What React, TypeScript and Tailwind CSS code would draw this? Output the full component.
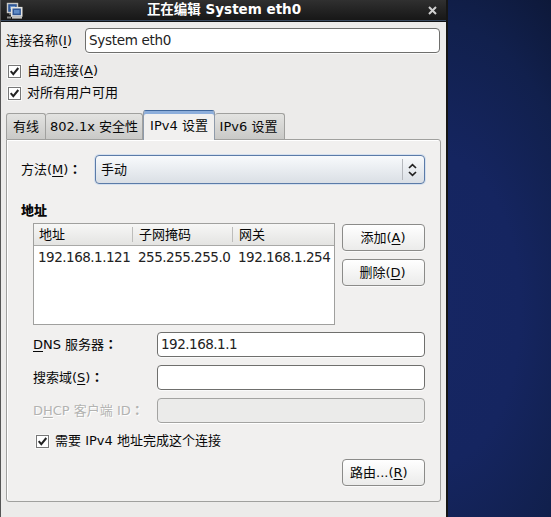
import type { ReactNode } from "react";
import clsx from "clsx";

function Key({ children }: { children: string }) {
  return <span className="underline decoration-1 underline-offset-2">{children}</span>;
}

function Colon() {
  return <span className="font-['Noto_Sans_CJK_JP'] font-bold">：</span>;
}

function Check({ className, children }: { className?: string; children: ReactNode }) {
  return (
    <label className={clsx("flex items-center gap-[6px] h-[22px]", className)}>
      <span className="w-[13px] h-[13px] bg-white border border-[#777] shadow-[0_0_0_1px_#f8f8f7]">
        <svg viewBox="0 0 11 11" className="w-[11px] h-[11px]" fill="none" stroke="#222" strokeWidth="2">
          <path d="M1.7 5.2 L4.3 8.2 L9.3 2" />
        </svg>
      </span>
      <span>{children}</span>
    </label>
  );
}

function Field({
  value = "",
  disabled,
  className,
}: {
  value?: string;
  disabled?: boolean;
  className: string;
}) {
  return (
    <div
      className={clsx(
        "h-[25px] shrink-0 rounded-[4px] border pl-[3px] text-[13.5px] leading-[22px] text-[#222]",
        disabled
          ? "border-[#a3a3a1] bg-[#ebebea] shadow-[0_1px_0_#fff]"
          : "border-[#6f6f6d] bg-white shadow-[0_1px_0_#fafafa]",
        className,
      )}
    >
      {value}
    </div>
  );
}

function Button({ className, children }: { className?: string; children: ReactNode }) {
  return (
    <button
      type="button"
      className={clsx(
        "block w-[83px] h-[27px] rounded-[4px] border border-[#8b8b89] bg-linear-to-b from-white to-[#ebebea] shadow-[0_1px_0_#fafafa] leading-[25px]",
        className,
      )}
    >
      {children}
    </button>
  );
}

function Tab({ active, className, children }: { active?: boolean; className: string; children: ReactNode }) {
  return (
    <div
      className={clsx(
        "border border-b-0 rounded-t-[3px] text-center overflow-hidden",
        active
          ? "h-[30px] -mb-px border-[#8e9aaa] border-t-[#3f679d] bg-[#f1f0ef] leading-[29px] shadow-[inset_0_3px_0_#8daedb]"
          : "h-[26px] border-[#a0a09e] bg-linear-to-b from-[#e3e3e1] to-[#c9c9c7] leading-[26px]",
        className,
      )}
    >
      {children}
    </div>
  );
}

function NetworkIcon() {
  return (
    <svg width="17" height="17" viewBox="0 0 17 17" className="ml-[5px]">
      <path d="M1 15.5 H5" stroke="#8a8a88" strokeWidth="2" />
      <path d="M3 12 H6" stroke="#777" strokeWidth="1.6" />
      <rect x="1.5" y="1.5" width="10" height="9" fill="#2f5796" stroke="#c9c9c6" strokeWidth="1.4" />
      <rect x="4" y="4" width="5" height="3" fill="#5f8bc6" />
      <rect x="5.7" y="5.7" width="10" height="8.3" fill="#2f5796" stroke="#e4e4e1" strokeWidth="1.6" />
      <rect x="8" y="8" width="5.5" height="3.6" fill="#5f8bc6" />
      <path d="M6 15.7 H16" stroke="#c4c4c1" strokeWidth="1.8" />
    </svg>
  );
}

function TitleBar() {
  return (
    <header className="flex items-center h-[22px] border-b border-b-[#101214] bg-linear-to-b from-[#303030] to-[#161616] text-white shadow-[inset_0_-1px_0_#38475c]">
      <NetworkIcon />
      <h1 className="flex-1 pr-[3px] text-center font-bold leading-[18px] -mt-[3px] text-[13.5px]">
        正在编辑 System eth0
      </h1>
      <svg width="9" height="9" viewBox="0 0 9 9" className="mr-[9px]">
        <path d="M1 1 L8 8 M8 1 L1 8" stroke="#d0d0d0" strokeWidth="2" />
      </svg>
    </header>
  );
}

const columns = ["地址", "子网掩码", "网关"];
const address = ["192.168.1.121", "255.255.255.0", "192.168.1.254"];

function AddressTable() {
  return (
    <div className="w-[302px] h-[102px] border border-[#a0a09e] bg-white">
      <div className="grid grid-cols-[99px_100px_101px] h-[22px] items-center border-b border-[#a9a9a7] bg-linear-to-b from-[#f7f7f6] to-[#e4e4e2]">
        {columns.map((name, i) => (
          <div
            key={name}
            className={clsx(
              "h-[15px] leading-[15px]",
              i === 0 ? "pl-[5px]" : "pl-[6px]",
              i < 2 && "border-r border-[#bdbdbb]",
            )}
          >
            {name}
          </div>
        ))}
      </div>
      <div className="grid grid-cols-[100px_100px_100px] h-[23px] text-[13.5px] text-[#222]">
        {address.map((part) => (
          <div key={part} className="pl-[4px] leading-[22px] tracking-[-0.5px] whitespace-nowrap">
            {part}
          </div>
        ))}
      </div>
    </div>
  );
}

function Ipv4Panel() {
  return (
    <section className="ml-[5px] w-[435px] h-[363px] rounded-b-[3px] rounded-tr-[3px] border border-[#a0a09e] bg-[#f1f0ef] pt-[15px] shadow-[inset_1px_1px_0_#fff]">
      <div className="flex items-center pl-[14px]">
        <span className="w-[74px]">
          方法(<Key>M</Key>)<Colon />
        </span>
        <div className="flex items-center w-[330px] h-[29px] rounded-[4px] border border-[#5b7ba8] bg-linear-to-b from-[#f8fafc] to-[#dadfe5] pl-[5px] shadow-[0_0_0_1px_#d5e0ee]">
          <span className="flex-1">手动</span>
          <span className="w-px h-[21px] bg-[#b5b8bd]" />
          <svg width="21" height="14" viewBox="0 0 21 14" fill="none" stroke="#222" strokeWidth="1.7">
            <path d="M6 5 L9.5 1.7 L13 5 M6 9 L9.5 12.3 L13 9" />
          </svg>
        </div>
      </div>

      <h2 className="mt-[17px] pl-[14px] h-[22px] leading-[20px] font-black">地址</h2>

      <div className="flex gap-[7px] pl-[26px]">
        <AddressTable />
        <div className="flex flex-col gap-[8px] pt-px">
          <Button className="pr-px">
            添加(<Key>A</Key>)
          </Button>
          <Button className="pr-[2px]">
            删除(<Key>D</Key>)
          </Button>
        </div>
      </div>

      <div className="mt-[7px] ml-[26px] flex flex-col gap-[8px]">
        <div className="flex items-center">
          <span className="w-[124px]">
            <Key>D</Key>NS 服务器<Colon />
          </span>
          <Field className="w-[268px] tracking-[-0.5px]" value="192.168.1.1" />
        </div>
        <div className="flex items-center">
          <span className="w-[124px]">
            搜索域(<Key>S</Key>)<Colon />
          </span>
          <Field className="w-[268px]" />
        </div>
        <div className="flex items-center">
          <span className="w-[124px] text-[#b3b3b1] [text-shadow:1px_1px_0_#fff]">
            D<Key>H</Key>CP 客户端 ID<Colon />
          </span>
          <Field className="w-[268px]" disabled />
        </div>
      </div>

      <Check className="mt-[7px] ml-[29px]">需要 IPv4 地址完成这个连接</Check>

      <Button className="mt-[7px] ml-[335px] text-left pl-[7px]">
        路由...(<Key>R</Key>)
      </Button>
    </section>
  );
}

export default function App() {
  return (
    <div className="flex w-[551px] h-[517px] overflow-hidden bg-[radial-gradient(ellipse_200px_380px_at_440px_310px,#162663_0%,#152560_40%,#11204d_75%,#0d1838_100%)] font-['DejaVu_Sans','Noto_Sans_CJK_SC',sans-serif] text-[13px] leading-[18px] text-[#080808]">
      <div className="w-[448px] border-l border-l-[#555] border-r-2 border-r-[#151515] bg-[#ecebea]">
        <TitleBar />
        <div className="flex items-center pt-[6px]">
          <span className="w-[84px] pl-[5px]">
            连接名称(<Key>I</Key>)
          </span>
          <Field className="w-[355px] tracking-[-0.3px]" value="System eth0" />
        </div>
        <Check className="mt-[7px] ml-[7px]">
          自动连接(<Key>A</Key>)
        </Check>
        <Check className="ml-[7px]">对所有用户可用</Check>

        <div className="flex items-end h-[35px] ml-[5px]">
          <Tab className="w-[40px]">有线</Tab>
          <Tab className="w-[97px] border-l-0">802.1x 安全性</Tab>
          <Tab className="relative w-[72px]" active>
            IPv4 设置
          </Tab>
          <Tab className="w-[70px] border-l-0 pr-[2px]">IPv6 设置</Tab>
        </div>
        <Ipv4Panel />
      </div>
    </div>
  );
}
